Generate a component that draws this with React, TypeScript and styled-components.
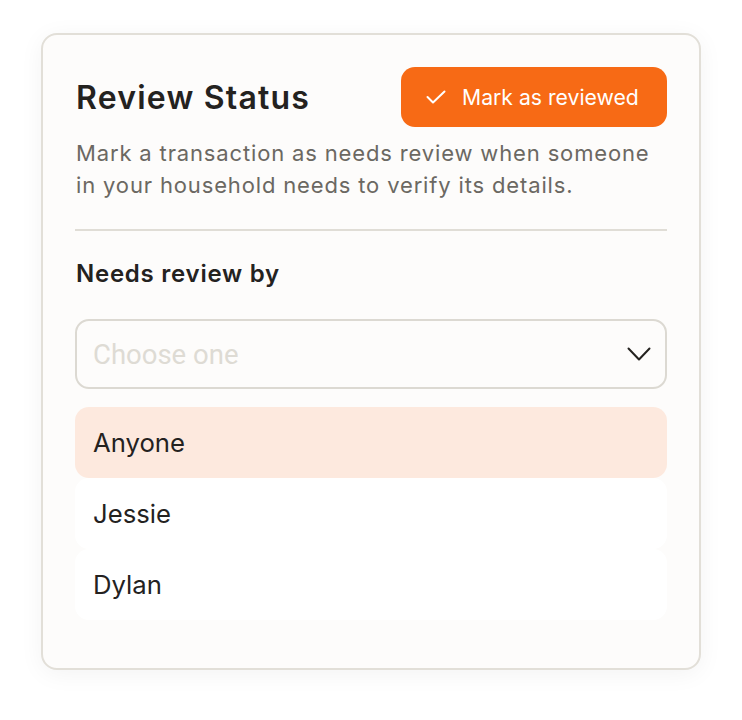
import styled, { createGlobalStyle } from "styled-components";

const GlobalStyle = createGlobalStyle`
  body {
    margin: 0;
    background: #ffffff;
    font-family: Inter, "Noto Sans", sans-serif;
  }
`;

const Page = styled.div`
  padding: 33px 41px;
`;

const Card = styled.section`
  box-sizing: border-box;
  width: 660px;
  height: 637px;
  padding: 32px 32px 0px 32px;
  background-color: #fdfcfb;
  border: solid 2px #e2dfd8;
  border-radius: 16px;
  box-shadow: 0px 4px 24px rgba(0, 0, 0, 0.05);
`;

const Header = styled.div`
  display: flex;
  justify-content: space-between;
  align-items: center;
`;

const Title = styled.h2`
  margin: 0px 0px 0px 1px;
  font-size: 32px;
  font-weight: 600;
  color: #24221f;
  letter-spacing: 1.2px;
`;

const ReviewButton = styled.button`
  display: flex;
  align-items: center;
  gap: 16px;
  width: 266px;
  height: 60px;
  padding: 0px 0px 0px 25px;
  border: none;
  border-radius: 14px;
  background-color: #f76a15;
  color: white;
  font-family: Inter, sans-serif;
  font-size: 21.2px;
  font-weight: 400;
  cursor: pointer;
`;

const Description = styled.p`
  margin: 10px 0px 0px 1px;
  font-size: 22px;
  line-height: 32px;
  color: #6b6862;
  letter-spacing: 0.85px;
`;

const Divider = styled.hr`
  margin: 28px 0px 0px 0px;
  border: none;
  border-top: solid 2px #e0ddd6;
`;

const Label = styled.h3`
  margin: 28px 0px 0px 1px;
  font-size: 24px;
  font-weight: 600;
  color: #24221f;
  letter-spacing: 0.75px;
`;

const SelectBox = styled.div`
  box-sizing: border-box;
  display: flex;
  justify-content: space-between;
  align-items: center;
  height: 70px;
  margin: 31px 0px 0px 0px;
  padding: 0px 14px 0px 16px;
  border: solid 2px #dcd9d2;
  border-radius: 14px;
  background-color: #fdfcfb;
`;

const Placeholder = styled.span`
  font-family: Roboto, sans-serif;
  font-size: 27.5px;
  color: #dedbd4;
`;

const OptionList = styled.ul`
  list-style: none;
  margin: 18px 0px 0px 0px;
  padding: 0px;
  display: flex;
  flex-direction: column;
`;

const Option = styled.li<{ $active?: boolean }>`
  display: flex;
  align-items: center;
  height: 71px;
  padding: 0px 18px;
  border-radius: 14px;
  background-color: ${(props) => (props.$active ? "#fde9de" : "#ffffff")};
  font-size: 25.7px;
  color: #24221f;
`;

const people = ["Anyone", "Jessie", "Dylan"];

export default function App() {
  return (
    <Page>
      <GlobalStyle />
      <Card>
        <Header>
          <Title>Review Status</Title>
          <ReviewButton type="button">
            <svg width="20" height="14" viewBox="0 0 20 14" fill="none" stroke="white" strokeWidth="2" strokeLinecap="round" strokeLinejoin="round">
              <path d="M1.5 7l5.5 5.5L18.5 1.5" />
            </svg>
            Mark as reviewed
          </ReviewButton>
        </Header>
        <Description>
          Mark a transaction as needs review when someone in your household
          needs to verify its details.
        </Description>
        <Divider />
        <Label>Needs review by</Label>
        <SelectBox>
          <Placeholder>Choose one</Placeholder>
          <svg width="24" height="14" viewBox="0 0 24 14" fill="none" stroke="#24221f" strokeWidth="2" strokeLinecap="round" strokeLinejoin="round">
            <path d="M1.5 1.5l10.5 11 10.5-11" />
          </svg>
        </SelectBox>
        <OptionList>
          {people.map((name, i) => (
            <Option key={name} $active={i === 0}>
              {name}
            </Option>
          ))}
        </OptionList>
      </Card>
    </Page>
  );
}
